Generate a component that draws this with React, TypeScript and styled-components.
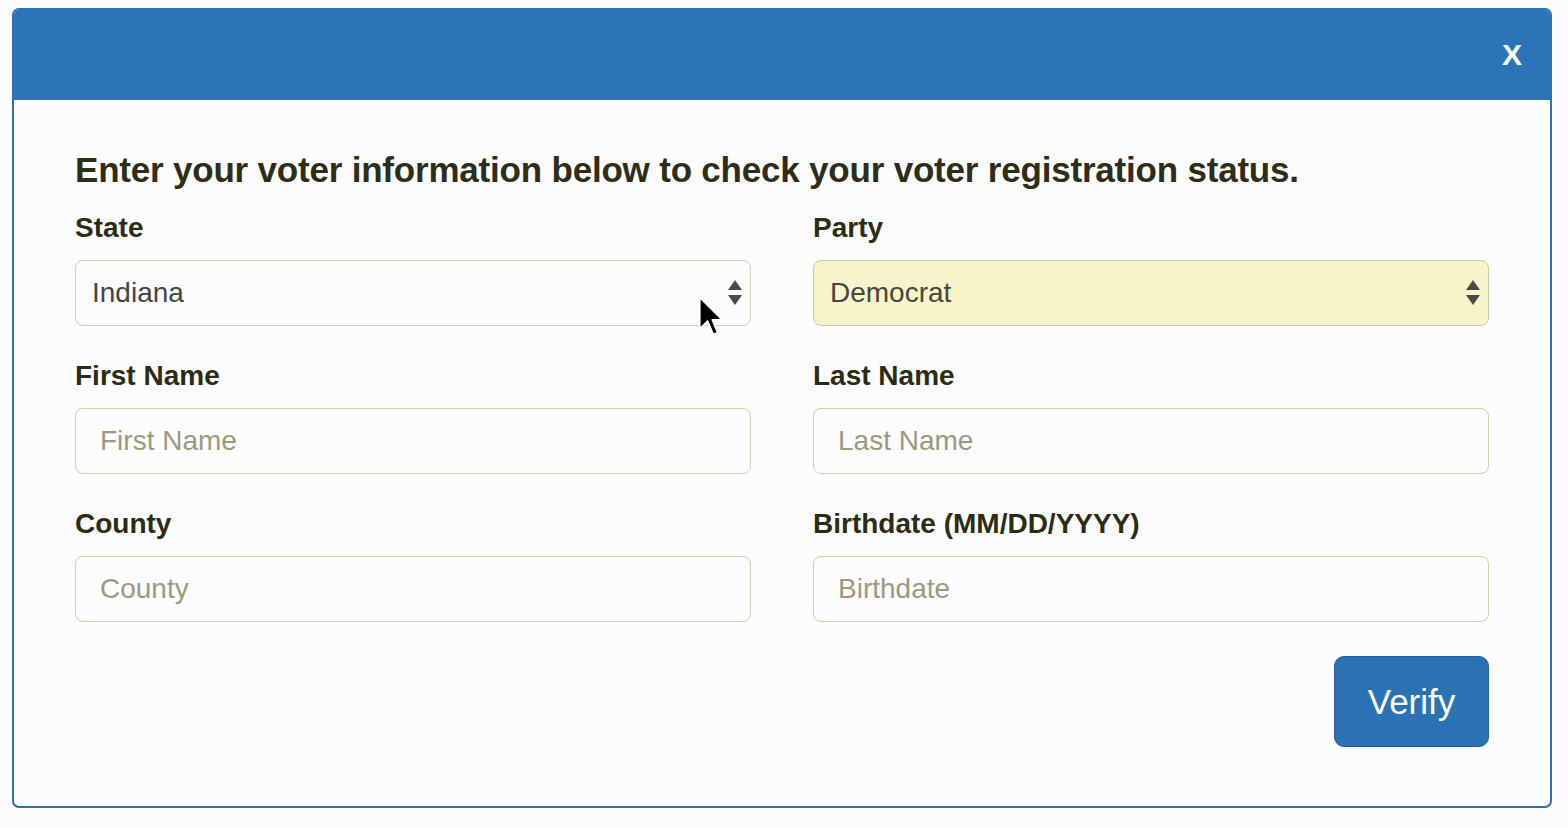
import React from "react";
import styled, { createGlobalStyle } from "styled-components";

const Global = createGlobalStyle`
  html, body { margin: 0; padding: 0; background: #fbfbfd; }
  body { font-family: "Liberation Sans", Arial, sans-serif; }
  * { box-sizing: border-box; }
`;

const Page = styled.div`
  width: 1568px;
  height: 828px;
  padding: 8px 16px 0 12px;
  position: relative;
  overflow: hidden;
`;

const Modal = styled.div`
  width: 1540px;
  height: 800px;
  border: 2px solid #2b72b4;
  border-radius: 7px;
  background: #fcfcfe;
  display: flex;
  flex-direction: column;
  overflow: hidden;
`;

const Header = styled.div`
  height: 90px;
  background: #2b74b7;
  display: flex;
  align-items: center;
  justify-content: flex-end;
  padding-right: 28px;
`;

const Close = styled.button`
  border: none;
  background: transparent;
  color: #ffffff;
  font-family: "Liberation Sans", Arial, sans-serif;
  font-weight: 700;
  font-size: 30px;
  padding: 0;
  margin-top: 0;
  cursor: pointer;
`;

const Body = styled.div`
  padding: 48px 61px 0 61px;
  display: flex;
  flex-direction: column;
`;

const Title = styled.h2`
  margin: 0 0 20px 0;
  font-size: 35px;
  font-weight: 700;
  color: #2e2e18;
  line-height: 44px;
  letter-spacing: -0.2px;
`;

const Grid = styled.div`
  display: grid;
  grid-template-columns: 676px 676px;
  column-gap: 62px;
  row-gap: 34px;
`;

const Field = styled.div`
  display: flex;
  flex-direction: column;
`;

const Label = styled.label`
  font-size: 28px;
  font-weight: 700;
  color: #2c2c14;
  line-height: 32px;
  margin-bottom: 16px;
`;

const SelectBox = styled.div<{ $autofill?: boolean }>`
  position: relative;
  height: 66px;
  border: 1px solid ${(p) => (p.$autofill ? "#c9c9a6" : "#cfcfb4")};
  border-radius: 8px;
  background: ${(p) => (p.$autofill ? "#f5f5c9" : "#fcfcfe")};
  display: flex;
  align-items: center;
  padding: 0 16px;
`;

const SelectText = styled.span`
  flex: 1;
  font-size: 28px;
  color: #46463e;
`;

const Arrows = styled.svg`
  width: 16px;
  height: 28px;
  margin-right: -9px;
`;

const Input = styled.input`
  height: 66px;
  border: 1px solid #cfcfac;
  border-radius: 8px;
  background: #fcfcfe;
  padding: 0 24px;
  font-family: "Liberation Sans", Arial, sans-serif;
  font-size: 28px;
  color: #46463e;
  outline: none;
  &::placeholder { color: #9a9a7c; }
`;

const Actions = styled.div`
  display: flex;
  justify-content: flex-end;
  margin-top: 34px;
`;

const Verify = styled.button`
  width: 155px;
  height: 91px;
  border: 1px solid #245f98;
  border-radius: 10px;
  background: #2b72b4;
  color: #ffffff;
  font-family: "Liberation Sans", Arial, sans-serif;
  font-size: 35px;
  cursor: pointer;
`;

const Cursor = styled.svg`
  position: absolute;
  left: 697px;
  top: 295px;
  width: 28px;
  height: 43px;
`;

const SelectArrows = () => (
  <Arrows viewBox="0 0 16 28">
    <polygon points="8,1 15,11 1,11" fill="#4a4a4a" />
    <polygon points="1,16 15,16 8,26" fill="#4a4a4a" />
  </Arrows>
);

export default function App() {
  return (
    <Page>
      <Global />
      <Modal>
        <Header>
          <Close>X</Close>
        </Header>
        <Body>
          <Title>Enter your voter information below to check your voter registration status.</Title>
          <Grid>
            <Field>
              <Label>State</Label>
              <SelectBox>
                <SelectText>Indiana</SelectText>
                <SelectArrows />
              </SelectBox>
            </Field>
            <Field>
              <Label>Party</Label>
              <SelectBox $autofill>
                <SelectText>Democrat</SelectText>
                <SelectArrows />
              </SelectBox>
            </Field>
            <Field>
              <Label>First Name</Label>
              <Input placeholder="First Name" />
            </Field>
            <Field>
              <Label>Last Name</Label>
              <Input placeholder="Last Name" />
            </Field>
            <Field>
              <Label>County</Label>
              <Input placeholder="County" />
            </Field>
            <Field>
              <Label>Birthdate (MM/DD/YYYY)</Label>
              <Input placeholder="Birthdate" />
            </Field>
          </Grid>
          <Actions>
            <Verify>Verify</Verify>
          </Actions>
        </Body>
      </Modal>
      <Cursor viewBox="0 0 12 19">
        <path d="M1 1 L1 15 L4.5 11.5 L7 17.5 L9 16.6 L6.6 11 L11 11 Z" fill="#000" stroke="#fff" strokeWidth="0.8" strokeLinejoin="round" />
      </Cursor>
    </Page>
  );
}
